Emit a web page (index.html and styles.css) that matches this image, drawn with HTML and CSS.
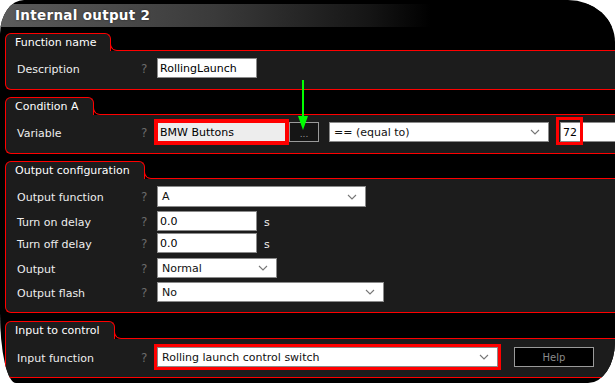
FILE: index.html
```html
<!DOCTYPE html>
<html lang="en">
<head>
    <meta charset="UTF-8">
    <meta name="viewport" content="width=device-width, initial-scale=1.0">
    <title>Internal output 2</title>
    <link rel="stylesheet" href="styles.css">
</head>
<body>
    <div class="window">
        <div class="titlebar">Internal output 2</div>

        <section class="group">
            <div class="tabrow"><div class="tab">Function name</div><div class="tabline"></div></div>
            <div class="panel">
                <div class="row">
                    <span class="label">Description</span>
                    <span class="help">?</span>
                    <input class="field w-desc" type="text" value="RollingLaunch">
                </div>
            </div>
        </section>

        <section class="group">
            <div class="tabrow"><div class="tab">Condition A</div><div class="tabline"></div></div>
            <div class="panel">
                <div class="row">
                    <span class="label">Variable</span>
                    <span class="help">?</span>
                    <input class="field w-var marked" type="text" value="BMW Buttons" readonly>
                    <button class="dots">...</button>
                    <div class="select w-cond"><span>== (equal to)</span><svg class="chev" viewBox="0 0 10 6"><path d="M1 1 L5 5 L9 1" /></svg></div>
                    <div class="value-wrap">
                        <input class="field w-val" type="text" value="72">
                        <span class="mark"></span>
                    </div>
                </div>
            </div>
        </section>

        <section class="group">
            <div class="tabrow"><div class="tab">Output configuration</div><div class="tabline"></div></div>
            <div class="panel config">
                <div class="row">
                    <span class="label">Output function</span>
                    <span class="help">?</span>
                    <div class="select w-func tall"><span>A</span><svg class="chev" viewBox="0 0 10 6"><path d="M1 1 L5 5 L9 1" /></svg></div>
                </div>
                <div class="row">
                    <span class="label">Turn on delay</span>
                    <span class="help">?</span>
                    <input class="field w-delay" type="text" value="0.0">
                    <span class="unit">s</span>
                </div>
                <div class="row">
                    <span class="label">Turn off delay</span>
                    <span class="help">?</span>
                    <input class="field w-delay" type="text" value="0.0">
                    <span class="unit">s</span>
                </div>
                <div class="row">
                    <span class="label">Output</span>
                    <span class="help">?</span>
                    <div class="select w-out"><span>Normal</span><svg class="chev" viewBox="0 0 10 6"><path d="M1 1 L5 5 L9 1" /></svg></div>
                </div>
                <div class="row">
                    <span class="label">Output flash</span>
                    <span class="help">?</span>
                    <div class="select w-flash"><span>No</span><svg class="chev" viewBox="0 0 10 6"><path d="M1 1 L5 5 L9 1" /></svg></div>
                </div>
            </div>
        </section>

        <section class="group last">
            <div class="tabrow"><div class="tab">Input to control</div><div class="tabline"></div></div>
            <div class="panel input-panel">
                <div class="row">
                    <span class="label">Input function</span>
                    <span class="help">?</span>
                    <div class="select w-input marked"><span>Rolling launch control switch</span><svg class="chev" viewBox="0 0 10 6"><path d="M1 1 L5 5 L9 1" /></svg></div>
                    <button class="help-btn">Help</button>
                </div>
            </div>
        </section>

        <!-- annotation arrow pointing at the browse button -->
        <svg class="arrow" width="12" height="52" viewBox="0 0 12 52">
            <rect x="5" y="0" width="2" height="38" fill="#00ff00" />
            <polygon points="1,36 11,36 6,50" fill="#00ff00" />
        </svg>
    </div>
</body>
</html>
```

FILE: styles.css
```css
body {
    margin: 0;
    background-color: #fff;
    font-family: "DejaVu Sans", Verdana, sans-serif;
    font-size: 11px;
}

.window {
    position: relative;
    width: 615px;
    height: 383px;
    overflow: hidden;
    background-color: #000;
    border-radius: 24px 47px 27px 16px / 34px 42px 41px 70px;
}

.titlebar {
    margin-top: 4px;
    height: 23px;
    line-height: 23px;
    padding-left: 15px;
    color: #fff;
    font-weight: bold;
    font-size: 13.5px;
    letter-spacing: 0.3px;
    text-shadow: 0 0 2px rgba(0, 0, 0, 0.6);
    background: linear-gradient(to right, #5c5c5c 0%, #3a3a3a 35%, #151515 60%, #000 70%);
}

.group {
    margin-top: 7px;
    margin-left: 5px;
}

.group:first-of-type {
    margin-top: 6px;
}

.group.last {
    margin-top: 8px;
}

.tabrow {
    display: flex;
    align-items: flex-end;
    height: 18px;
}

.tab {
    height: 17px;
    padding: 0 14px 0 9px;
    line-height: 17px;
    color: #fff;
    background-color: #1c1c1c;
    border: 1px solid #ff0000;
    border-bottom: none;
    border-radius: 6px 6px 0 0;
}

.tabline {
    flex: 1;
    height: 7px;
    margin-left: -1px;
    border-left: 1px solid #ff0000;
    border-bottom: 1px solid #ff0000;
    border-bottom-left-radius: 7px;
}

.panel {
    box-sizing: border-box;
    height: 39px;
    padding: 7px 0 0 11px;
    background-color: #1c1c1c;
    border-left: 1px solid #ff0000;
    border-bottom: 1px solid #ff0000;
    border-bottom-left-radius: 6px;
}

.panel.config {
    height: 134px;
    display: grid;
    grid-template-rows: 25px 22px 25px 24px 20px;
}

.panel.input-panel {
    height: 39px;
    padding-top: 8px;
}

.row {
    display: flex;
    align-items: flex-start;
    height: 20px;
}

.row > * {
    flex-shrink: 0;
}

.label {
    width: 124px;
    color: #eee;
    line-height: 23px;
}

.help {
    width: 16px;
    color: #6b6b6b;
    line-height: 22px;
    font-size: 12px;
}

.field {
    box-sizing: border-box;
    height: 20px;
    margin: 0;
    padding: 0 2px;
    font-family: "DejaVu Sans", Verdana, sans-serif;
    font-size: 11px;
    color: #000;
    background-color: #fff;
    border: 1px solid #8a8a8a;
    outline: none;
}

.w-desc { width: 100px; }
.w-var { width: 129px; background-color: #ededed; }
.w-delay { width: 100px; }
.w-val { width: 80px; }

.marked {
    border-color: #ff0000;
    outline: 3px solid #ff0000;
}

.dots {
    box-sizing: border-box;
    width: 30px;
    height: 20px;
    margin-left: 3px;
    padding: 4px 0 0;
    font-family: "DejaVu Sans", sans-serif;
    font-size: 9px;
    color: #999;
    background-color: #151515;
    border: 1px solid #9a9a9a;
}

.select {
    box-sizing: border-box;
    display: flex;
    align-items: center;
    justify-content: space-between;
    height: 20px;
    padding: 0 8px 0 4px;
    background-color: #fff;
    border: 1px solid #8a8a8a;
    color: #111;
}

.select.tall {
    height: 21px;
}

.chev {
    width: 10px;
    height: 6px;
    fill: none;
    stroke: #777;
    stroke-width: 1.1;
}

.w-cond { width: 220px; margin-left: 10px; }
.w-func { width: 209px; }
.w-out { width: 120px; }
.w-flash { width: 227px; }
.w-input { width: 341px; }

.value-wrap {
    position: relative;
    margin-left: 11px;
}

.mark {
    position: absolute;
    left: -4px;
    top: -5px;
    width: 21px;
    height: 22px;
    border: 3px solid #ff0000;
}

.unit {
    margin-left: 7px;
    color: #eee;
    line-height: 24px;
}

.help-btn {
    box-sizing: border-box;
    width: 80px;
    height: 20px;
    margin-left: 16px;
    font-family: "DejaVu Sans", sans-serif;
    font-size: 10px;
    color: #8a8a8a;
    background-color: #000;
    border: 1px solid #9a9a9a;
}

.arrow {
    position: absolute;
    left: 297px;
    top: 80px;
}
```
